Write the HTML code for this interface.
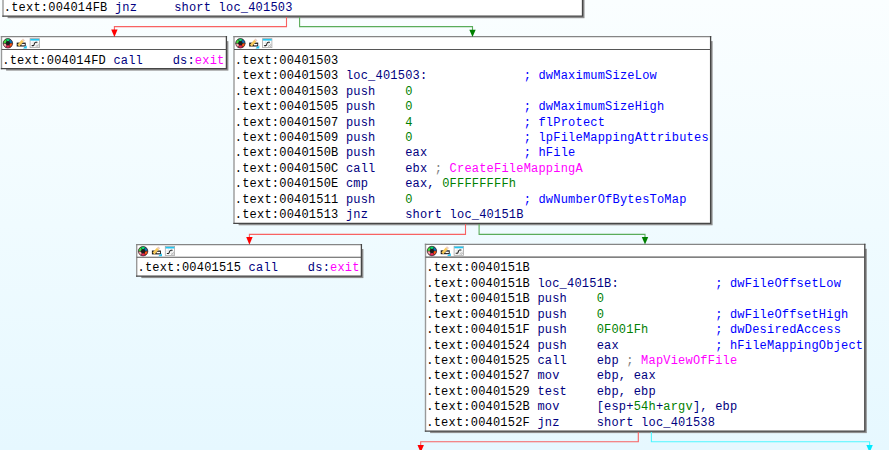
<!DOCTYPE html>
<html><head><meta charset="utf-8"><title>graph</title>
<style>
html,body{margin:0;padding:0;}
body{width:889px;height:450px;overflow:hidden;position:relative;background:linear-gradient(to bottom,#fafeff 0px,#e6f8ff 450px);font-family:"Liberation Mono",monospace;font-size:12.00px;letter-spacing:0.205px;color:#000;}
svg.e{position:absolute;left:0;top:0;}
.l{position:absolute;white-space:pre;height:16px;line-height:16px;}
.n{color:#000080}.g{color:#008000}.c{color:#0000ff}.m{color:#ff00ff}.y{color:#808080}
</style></head><body>
<svg class="e" width="889" height="450" viewBox="0 0 889 450">
<defs>
<filter id="b" x="-5%" y="-5%" width="110%" height="110%"><feGaussianBlur stdDeviation="0.65"/></filter>
</defs>

<rect x="7.6" y="-15.6" width="576.9" height="33.8" fill="#8e8e8e" filter="url(#b)"/>
<rect x="6.1" y="41.1" width="222.3" height="29.5" fill="#8e8e8e" filter="url(#b)"/>
<rect x="238.6" y="41.1" width="474.0" height="184.2" fill="#8e8e8e" filter="url(#b)"/>
<rect x="141.3" y="249.0" width="222.1" height="29.1" fill="#8e8e8e" filter="url(#b)"/>
<rect x="430.1" y="248.8" width="436.7" height="184.3" fill="#8e8e8e" filter="url(#b)"/>
<rect x="3.0" y="-20.0" width="579.5" height="36.2" fill="#fff"/>
<g fill="none" stroke-linecap="square">
<path d="M3.0 16.2V-20.0" stroke="#999" stroke-width="1.4"/>
<path d="M3.0 -20.0H582.5" stroke="#858585" stroke-width="1.3"/>
<path d="M582.5 -20.0V16.2H3.0" stroke="#464646" stroke-width="1.3"/>
</g>
<rect x="1.5" y="36.7" width="224.9" height="31.9" fill="#fff"/>
<g fill="none" stroke-linecap="square">
<path d="M1.5 68.6V36.7" stroke="#999" stroke-width="1.4"/>
<path d="M1.5 36.7H226.4" stroke="#858585" stroke-width="1.3"/>
<path d="M226.4 36.7V68.6H1.5" stroke="#464646" stroke-width="1.3"/>
<path d="M1.5 49.4H226.4" stroke="#565656" stroke-width="1.05" stroke-linecap="butt"/>
</g>
<g transform="translate(1.5 36.7)">
<circle cx="6.4" cy="6.6" r="4.75" fill="#2a2226"/>
<g stroke="#2a2024" stroke-width="0.35">
<path d="M6.4 6.6 L4.05 2.55 A4.7 4.7 0 0 1 8.75 2.55Z" fill="#08e070"/>
<path d="M6.4 6.6 L8.75 2.55 A4.7 4.7 0 0 1 11.1 6.6Z" fill="#0872b4"/>
<path d="M6.4 6.6 L11.1 6.6 A4.7 4.7 0 0 1 8.75 10.65Z" fill="#ff5410"/>
<path d="M6.4 6.6 L8.75 10.65 A4.7 4.7 0 0 1 4.05 10.65Z" fill="#f02454"/>
<path d="M6.4 6.6 L4.05 10.65 A4.7 4.7 0 0 1 1.7 6.6Z" fill="#ffa4a8"/>
<path d="M6.4 6.6 L1.7 6.6 A4.7 4.7 0 0 1 4.05 2.55Z" fill="#40e440"/>
</g>
<circle cx="6.4" cy="6.6" r="4.75" fill="none" stroke="#503840" stroke-width="0.45"/>
<circle cx="6.4" cy="6.6" r="2.2" fill="#1c1c1c"/>
<rect x="15.2" y="5.9" width="9" height="3.9" fill="#1a1a1a"/>
<rect x="19.9" y="7.2" width="3.4" height="1.5" fill="#fff"/>
<path d="M21.6 11.7 L23.2 9.8 h1.1 l1.0 -1.3 V11.7Z" fill="#20c4f0"/>
<path d="M15.8 8.0 L20.3 3.1 L22.3 4.9 L17.8 9.9Z" fill="#f6c85a"/>
<path d="M20.3 3.1 L21.5 1.9 L23.5 3.7 L22.3 4.9Z" fill="#eaccc0"/>
<rect x="28.6" y="1.9" width="9.3" height="9.0" fill="#fff" stroke="#a8a8a8" stroke-width="0.8"/>
<path d="M31.7 4 v6.6 M34.7 4 v6.6 M29 6.4 h8.4 M29 8.8 h8.4" stroke="#dcdcdc" stroke-width="0.6" fill="none"/>
<rect x="28.8" y="2.2" width="8.9" height="1.7" fill="#22c6f2"/>
<path d="M30.2 8.9 h1.5 c1.3 0 0.9 -3.3 2.4 -3.3 h1.8" fill="none" stroke="#222" stroke-width="1.05"/>
<path d="M34.5 10.0 l2.8 -2.8 M35.8 10.4 l1.6 -1.6" stroke="#888" stroke-width="0.6"/>
</g>
<rect x="234.0" y="36.7" width="476.6" height="186.6" fill="#fff"/>
<g fill="none" stroke-linecap="square">
<path d="M234.0 223.3V36.7" stroke="#999" stroke-width="1.4"/>
<path d="M234.0 36.7H710.6" stroke="#858585" stroke-width="1.3"/>
<path d="M710.6 36.7V223.3H234.0" stroke="#464646" stroke-width="1.3"/>
<path d="M234.0 49.4H710.6" stroke="#565656" stroke-width="1.05" stroke-linecap="butt"/>
</g>
<g transform="translate(234.0 36.7)">
<circle cx="6.4" cy="6.6" r="4.75" fill="#2a2226"/>
<g stroke="#2a2024" stroke-width="0.35">
<path d="M6.4 6.6 L4.05 2.55 A4.7 4.7 0 0 1 8.75 2.55Z" fill="#08e070"/>
<path d="M6.4 6.6 L8.75 2.55 A4.7 4.7 0 0 1 11.1 6.6Z" fill="#0872b4"/>
<path d="M6.4 6.6 L11.1 6.6 A4.7 4.7 0 0 1 8.75 10.65Z" fill="#ff5410"/>
<path d="M6.4 6.6 L8.75 10.65 A4.7 4.7 0 0 1 4.05 10.65Z" fill="#f02454"/>
<path d="M6.4 6.6 L4.05 10.65 A4.7 4.7 0 0 1 1.7 6.6Z" fill="#ffa4a8"/>
<path d="M6.4 6.6 L1.7 6.6 A4.7 4.7 0 0 1 4.05 2.55Z" fill="#40e440"/>
</g>
<circle cx="6.4" cy="6.6" r="4.75" fill="none" stroke="#503840" stroke-width="0.45"/>
<circle cx="6.4" cy="6.6" r="2.2" fill="#1c1c1c"/>
<rect x="15.2" y="5.9" width="9" height="3.9" fill="#1a1a1a"/>
<rect x="19.9" y="7.2" width="3.4" height="1.5" fill="#fff"/>
<path d="M21.6 11.7 L23.2 9.8 h1.1 l1.0 -1.3 V11.7Z" fill="#20c4f0"/>
<path d="M15.8 8.0 L20.3 3.1 L22.3 4.9 L17.8 9.9Z" fill="#f6c85a"/>
<path d="M20.3 3.1 L21.5 1.9 L23.5 3.7 L22.3 4.9Z" fill="#eaccc0"/>
<rect x="28.6" y="1.9" width="9.3" height="9.0" fill="#fff" stroke="#a8a8a8" stroke-width="0.8"/>
<path d="M31.7 4 v6.6 M34.7 4 v6.6 M29 6.4 h8.4 M29 8.8 h8.4" stroke="#dcdcdc" stroke-width="0.6" fill="none"/>
<rect x="28.8" y="2.2" width="8.9" height="1.7" fill="#22c6f2"/>
<path d="M30.2 8.9 h1.5 c1.3 0 0.9 -3.3 2.4 -3.3 h1.8" fill="none" stroke="#222" stroke-width="1.05"/>
<path d="M34.5 10.0 l2.8 -2.8 M35.8 10.4 l1.6 -1.6" stroke="#888" stroke-width="0.6"/>
</g>
<rect x="136.7" y="244.6" width="224.7" height="31.5" fill="#fff"/>
<g fill="none" stroke-linecap="square">
<path d="M136.7 276.1V244.6" stroke="#999" stroke-width="1.4"/>
<path d="M136.7 244.6H361.4" stroke="#858585" stroke-width="1.3"/>
<path d="M361.4 244.6V276.1H136.7" stroke="#464646" stroke-width="1.3"/>
<path d="M136.7 257.3H361.4" stroke="#565656" stroke-width="1.05" stroke-linecap="butt"/>
</g>
<g transform="translate(136.7 244.6)">
<circle cx="6.4" cy="6.6" r="4.75" fill="#2a2226"/>
<g stroke="#2a2024" stroke-width="0.35">
<path d="M6.4 6.6 L4.05 2.55 A4.7 4.7 0 0 1 8.75 2.55Z" fill="#08e070"/>
<path d="M6.4 6.6 L8.75 2.55 A4.7 4.7 0 0 1 11.1 6.6Z" fill="#0872b4"/>
<path d="M6.4 6.6 L11.1 6.6 A4.7 4.7 0 0 1 8.75 10.65Z" fill="#ff5410"/>
<path d="M6.4 6.6 L8.75 10.65 A4.7 4.7 0 0 1 4.05 10.65Z" fill="#f02454"/>
<path d="M6.4 6.6 L4.05 10.65 A4.7 4.7 0 0 1 1.7 6.6Z" fill="#ffa4a8"/>
<path d="M6.4 6.6 L1.7 6.6 A4.7 4.7 0 0 1 4.05 2.55Z" fill="#40e440"/>
</g>
<circle cx="6.4" cy="6.6" r="4.75" fill="none" stroke="#503840" stroke-width="0.45"/>
<circle cx="6.4" cy="6.6" r="2.2" fill="#1c1c1c"/>
<rect x="15.2" y="5.9" width="9" height="3.9" fill="#1a1a1a"/>
<rect x="19.9" y="7.2" width="3.4" height="1.5" fill="#fff"/>
<path d="M21.6 11.7 L23.2 9.8 h1.1 l1.0 -1.3 V11.7Z" fill="#20c4f0"/>
<path d="M15.8 8.0 L20.3 3.1 L22.3 4.9 L17.8 9.9Z" fill="#f6c85a"/>
<path d="M20.3 3.1 L21.5 1.9 L23.5 3.7 L22.3 4.9Z" fill="#eaccc0"/>
<rect x="28.6" y="1.9" width="9.3" height="9.0" fill="#fff" stroke="#a8a8a8" stroke-width="0.8"/>
<path d="M31.7 4 v6.6 M34.7 4 v6.6 M29 6.4 h8.4 M29 8.8 h8.4" stroke="#dcdcdc" stroke-width="0.6" fill="none"/>
<rect x="28.8" y="2.2" width="8.9" height="1.7" fill="#22c6f2"/>
<path d="M30.2 8.9 h1.5 c1.3 0 0.9 -3.3 2.4 -3.3 h1.8" fill="none" stroke="#222" stroke-width="1.05"/>
<path d="M34.5 10.0 l2.8 -2.8 M35.8 10.4 l1.6 -1.6" stroke="#888" stroke-width="0.6"/>
</g>
<rect x="425.5" y="244.4" width="439.3" height="186.7" fill="#fff"/>
<g fill="none" stroke-linecap="square">
<path d="M425.5 431.1V244.4" stroke="#999" stroke-width="1.4"/>
<path d="M425.5 244.4H864.8" stroke="#858585" stroke-width="1.3"/>
<path d="M864.8 244.4V431.1H425.5" stroke="#464646" stroke-width="1.3"/>
<path d="M425.5 257.1H864.8" stroke="#565656" stroke-width="1.05" stroke-linecap="butt"/>
</g>
<g transform="translate(425.5 244.4)">
<circle cx="6.4" cy="6.6" r="4.75" fill="#2a2226"/>
<g stroke="#2a2024" stroke-width="0.35">
<path d="M6.4 6.6 L4.05 2.55 A4.7 4.7 0 0 1 8.75 2.55Z" fill="#08e070"/>
<path d="M6.4 6.6 L8.75 2.55 A4.7 4.7 0 0 1 11.1 6.6Z" fill="#0872b4"/>
<path d="M6.4 6.6 L11.1 6.6 A4.7 4.7 0 0 1 8.75 10.65Z" fill="#ff5410"/>
<path d="M6.4 6.6 L8.75 10.65 A4.7 4.7 0 0 1 4.05 10.65Z" fill="#f02454"/>
<path d="M6.4 6.6 L4.05 10.65 A4.7 4.7 0 0 1 1.7 6.6Z" fill="#ffa4a8"/>
<path d="M6.4 6.6 L1.7 6.6 A4.7 4.7 0 0 1 4.05 2.55Z" fill="#40e440"/>
</g>
<circle cx="6.4" cy="6.6" r="4.75" fill="none" stroke="#503840" stroke-width="0.45"/>
<circle cx="6.4" cy="6.6" r="2.2" fill="#1c1c1c"/>
<rect x="15.2" y="5.9" width="9" height="3.9" fill="#1a1a1a"/>
<rect x="19.9" y="7.2" width="3.4" height="1.5" fill="#fff"/>
<path d="M21.6 11.7 L23.2 9.8 h1.1 l1.0 -1.3 V11.7Z" fill="#20c4f0"/>
<path d="M15.8 8.0 L20.3 3.1 L22.3 4.9 L17.8 9.9Z" fill="#f6c85a"/>
<path d="M20.3 3.1 L21.5 1.9 L23.5 3.7 L22.3 4.9Z" fill="#eaccc0"/>
<rect x="28.6" y="1.9" width="9.3" height="9.0" fill="#fff" stroke="#a8a8a8" stroke-width="0.8"/>
<path d="M31.7 4 v6.6 M34.7 4 v6.6 M29 6.4 h8.4 M29 8.8 h8.4" stroke="#dcdcdc" stroke-width="0.6" fill="none"/>
<rect x="28.8" y="2.2" width="8.9" height="1.7" fill="#22c6f2"/>
<path d="M30.2 8.9 h1.5 c1.3 0 0.9 -3.3 2.4 -3.3 h1.8" fill="none" stroke="#222" stroke-width="1.05"/>
<path d="M34.5 10.0 l2.8 -2.8 M35.8 10.4 l1.6 -1.6" stroke="#888" stroke-width="0.6"/>
</g>
<path d="M286.5 17.0 L286.5 26.6 L114.4 26.6 L114.4 30.0" fill="none" stroke="#f86262" stroke-width="1.1"/>
<path d="M111.2 29.6H117.6L114.4 37.0Z" fill="#ff0000"/>
<path d="M299.6 17.0 L299.6 26.6 L472.5 26.6 L472.5 30.0" fill="none" stroke="#5aac5a" stroke-width="1.1"/>
<path d="M469.3 29.8H475.7L472.5 36.9Z" fill="#008000"/>
<path d="M465.5 224.0 L465.5 234.4 L249.4 234.4 L249.4 238.0" fill="none" stroke="#f86262" stroke-width="1.1"/>
<path d="M246.2 237.0H252.6L249.4 244.8Z" fill="#ff0000"/>
<path d="M479.1 224.0 L479.1 234.4 L645.0 234.4 L645.0 238.0" fill="none" stroke="#5aac5a" stroke-width="1.1"/>
<path d="M641.8 237.0H648.2L645.0 244.5Z" fill="#008000"/>
<path d="M638.3 432.0 L638.3 441.7 L420.7 441.7 L420.7 446.0" fill="none" stroke="#f86262" stroke-width="1.1"/>
<path d="M417.5 445.0H423.9L420.7 452.6Z" fill="#ff0000"/>
<path d="M651.4 432.0 L651.4 441.7 L869.6 441.7 L869.6 446.0" fill="none" stroke="#50f6ff" stroke-width="1.1"/>
<path d="M866.4 445.0H872.8L869.6 452.6Z" fill="#00eaff"/>
</svg>
<div class="l" style="left:3.80px;top:0.00px">.text:004014FB <span class="n">jnz     short loc_401503</span></div>
<div class="l" style="left:2.30px;top:53.00px">.text:004014FD <span class="n">call    ds:</span><span class="m">exit</span></div>
<div class="l" style="left:234.80px;top:53.00px">.text:00401503</div>
<div class="l" style="left:234.80px;top:68.00px">.text:00401503 <span class="n">loc_401503:</span>             <span class="c">; dwMaximumSizeLow</span></div>
<div class="l" style="left:234.80px;top:84.00px">.text:00401503 <span class="n">push    </span><span class="g">0</span></div>
<div class="l" style="left:234.80px;top:99.00px">.text:00401505 <span class="n">push    </span><span class="g">0</span>               <span class="c">; dwMaximumSizeHigh</span></div>
<div class="l" style="left:234.80px;top:115.00px">.text:00401507 <span class="n">push    </span><span class="g">4</span>               <span class="c">; flProtect</span></div>
<div class="l" style="left:234.80px;top:130.00px">.text:00401509 <span class="n">push    </span><span class="g">0</span>               <span class="c">; lpFileMappingAttributes</span></div>
<div class="l" style="left:234.80px;top:145.00px">.text:0040150B <span class="n">push    eax</span>             <span class="c">; hFile</span></div>
<div class="l" style="left:234.80px;top:161.00px">.text:0040150C <span class="n">call    ebx</span> <span class="y">;</span> <span class="m">CreateFileMappingA</span></div>
<div class="l" style="left:234.80px;top:176.00px">.text:0040150E <span class="n">cmp     eax, </span><span class="g">0FFFFFFFFh</span></div>
<div class="l" style="left:234.80px;top:192.00px">.text:00401511 <span class="n">push    </span><span class="g">0</span>               <span class="c">; dwNumberOfBytesToMap</span></div>
<div class="l" style="left:234.80px;top:207.00px">.text:00401513 <span class="n">jnz     short loc_40151B</span></div>
<div class="l" style="left:137.50px;top:260.00px">.text:00401515 <span class="n">call    ds:</span><span class="m">exit</span></div>
<div class="l" style="left:426.30px;top:260.00px">.text:0040151B</div>
<div class="l" style="left:426.30px;top:276.00px">.text:0040151B <span class="n">loc_40151B:</span>             <span class="c">; dwFileOffsetLow</span></div>
<div class="l" style="left:426.30px;top:291.00px">.text:0040151B <span class="n">push    </span><span class="g">0</span></div>
<div class="l" style="left:426.30px;top:307.00px">.text:0040151D <span class="n">push    </span><span class="g">0</span>               <span class="c">; dwFileOffsetHigh</span></div>
<div class="l" style="left:426.30px;top:322.00px">.text:0040151F <span class="n">push    </span><span class="g">0F001Fh</span>         <span class="c">; dwDesiredAccess</span></div>
<div class="l" style="left:426.30px;top:338.00px">.text:00401524 <span class="n">push    eax</span>             <span class="c">; hFileMappingObject</span></div>
<div class="l" style="left:426.30px;top:353.00px">.text:00401525 <span class="n">call    ebp</span> <span class="y">;</span> <span class="m">MapViewOfFile</span></div>
<div class="l" style="left:426.30px;top:368.00px">.text:00401527 <span class="n">mov     ebp, eax</span></div>
<div class="l" style="left:426.30px;top:384.00px">.text:00401529 <span class="n">test    ebp, ebp</span></div>
<div class="l" style="left:426.30px;top:399.00px">.text:0040152B <span class="n">mov     [esp+</span><span class="g">54h</span><span class="n">+</span><span class="g">argv</span><span class="n">], ebp</span></div>
<div class="l" style="left:426.30px;top:415.00px">.text:0040152F <span class="n">jnz     short loc_401538</span></div>
</body></html>
